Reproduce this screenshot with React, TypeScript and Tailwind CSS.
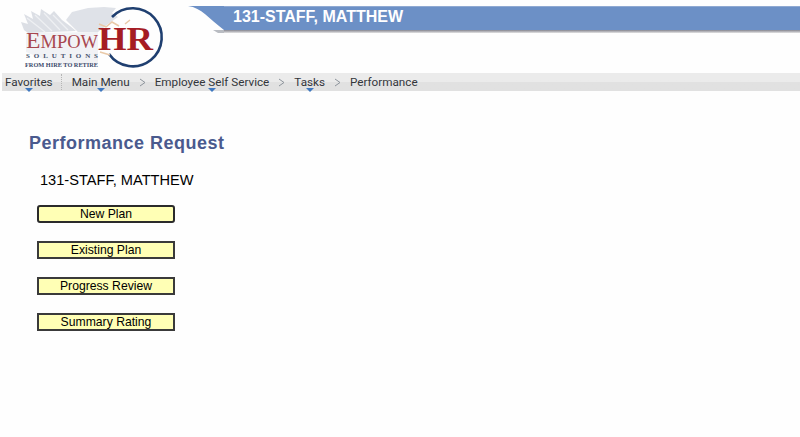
import type React from "react";

// Logo drawing: grey eagle, navy ring and the company wordmark
const Logo: React.FC = () => (
  <svg width="188" height="73" viewBox="0 0 188 73" className="block shrink-0">
    <path d="M24 30 L21 22 L28 24 L24 14 L33 19 L31 11 L40 16 L41 9 L50 15 L54 11 L62 20 L70 26 L76 31 L28 33 Z" fill="#dcdfe5" />
    <path d="M66 20 L72 12 L88 8 L104 7 L116 8 L112 13 L118 17 L108 24 L98 32 L78 32 Z" fill="#dfe2e8" />
    <path d="M26 33 L98 32 L98 64 L60 66 L26 52 Z" fill="#f1f2f5" />
    <g stroke="#eef0f3" strokeWidth="1.2" fill="none">
      <path d="M27 18 L45 32" />
      <path d="M35 15 L52 31" />
      <path d="M44 13 L60 30" />
      <path d="M53 15 L68 30" />
    </g>
    <path d="M112 17 A29 29 0 1 1 109 54" fill="none" stroke="#1f3f70" strokeWidth="2.6" />
    <path d="M99 24 L106 27 L112 22 L119 26 M100 52 L110 55 M125 24 L130 20" stroke="#e9c9a8" strokeWidth="1.5" fill="none" />
    <text x="26" y="48" fill="#a8474f" fontFamily="'Liberation Serif', serif" textLength="72" lengthAdjust="spacingAndGlyphs">
      <tspan fontSize="23">E</tspan>
      <tspan fontSize="18">MPOW</tspan>
    </text>
    <text x="98" y="50" fill="#a51c24" fontSize="33" fontWeight="700" fontFamily="'Liberation Serif', serif" textLength="55" lengthAdjust="spacingAndGlyphs">
      HR
    </text>
    <text x="26" y="58" fill="#45506b" fontSize="7" fontWeight="700" fontFamily="'Liberation Serif', serif" textLength="72">
      SOLUTIONS
    </text>
    <text x="25" y="66.5" fill="#3c4a6b" fontSize="6.4" fontWeight="700" fontFamily="'Liberation Serif', serif" textLength="73" lengthAdjust="spacingAndGlyphs">
      FROM HIRE TO RETIRE
    </text>
  </svg>
);

// Blue name banner, the left end is a curved cut
const Banner: React.FC = () => (
  <div className="flex-1 min-w-0 pt-[6px]">
    <div className="flex h-[27px]">
      <svg width="36" height="27" viewBox="0 0 36 27" className="block shrink-0">
        <path d="M0 0 H36 V24 C20 12 14 2 0 0 Z" fill="#6c90c6" />
        <path d="M25 24 L36 24 V27 H30 Z" fill="#b9bcc2" />
      </svg>
      <div className="flex-1 flex flex-col">
        <div className="h-[24px] bg-[#6c90c6] border-t border-[#8fa9d2] text-white font-bold text-[16px] leading-[20px] pl-[9px] font-['Liberation_Sans',sans-serif]">
          131-STAFF, MATTHEW
        </div>
        <div className="h-[3px] bg-gradient-to-b from-[#85858f] to-[#e4e4e4]" />
      </div>
    </div>
  </div>
);

const Caret: React.FC = () => (
  <span className="absolute left-1/2 bottom-[-1px] -translate-x-1/2 w-0 h-0 border-x-[4px] border-x-transparent border-t-[4px] border-t-[#3f78c0]" />
);

const Chevron: React.FC = () => (
  <svg width="7" height="9" viewBox="0 0 7 9" className="block shrink-0 mx-[9px]">
    <path d="M1 1 L6 4.5 L1 8" fill="none" stroke="#8d949c" strokeWidth="1" />
  </svg>
);

const NavBar: React.FC = () => (
  <div className="ml-[2px] h-[18px] bg-gradient-to-b from-[#ebebeb] from-50% to-[#e1e1e1] to-50% flex items-center text-[11.7px] text-[#33363b] font-['Roboto',sans-serif] leading-[14px] whitespace-nowrap">
    <span className="relative ml-[3px] h-full flex items-center">
      Favorites
      <Caret />
    </span>
    <span className="h-[16px] ml-[8px] mr-[10px] border-l border-dotted border-[#b5b5b5]" />
    <span className="relative h-full flex items-center">
      Main Menu
      <Caret />
    </span>
    <Chevron />
    <span className="relative h-full flex items-center">
      Employee Self Service
      <Caret />
    </span>
    <Chevron />
    <span className="relative h-full flex items-center">
      Tasks
      <Caret />
    </span>
    <Chevron />
    <span>Performance</span>
  </div>
);

const RequestButton: React.FC<{ label: string; rounded?: boolean }> = ({ label, rounded }) => (
  <button
    className={
      rounded
        ? "block w-[138px] h-[18px] bg-[#ffffb5] border-2 border-[#2b2b2b] rounded-[3px] text-[12.2px] leading-[14px] text-black text-center"
        : "block w-[138px] h-[18px] bg-[#ffffb5] border-2 border-[#3a3a3a] text-[12.2px] leading-[14px] text-black text-center"
    }
  >
    {label}
  </button>
);

export default function App() {
  return (
    <div className="w-[800px] h-[437px] overflow-hidden bg-[#fefefe] font-['Liberation_Sans',sans-serif]">
      <div className="flex h-[73px]">
        <Logo />
        <Banner />
      </div>
      <NavBar />
      <div className="pt-[41px] pl-[29px]">
        <h1 className="text-[18px] leading-[22px] font-bold tracking-[0.5px] text-[#4a5a8e]">Performance Request</h1>
        <p className="mt-[17px] ml-[11px] text-[14.6px] leading-[18px] text-black">131-STAFF, MATTHEW</p>
        <div className="mt-[16px] ml-[8px] flex flex-col gap-[18px]">
          <RequestButton label="New Plan" rounded />
          <RequestButton label="Existing Plan" />
          <RequestButton label="Progress Review" />
          <RequestButton label="Summary Rating" />
        </div>
      </div>
    </div>
  );
}
